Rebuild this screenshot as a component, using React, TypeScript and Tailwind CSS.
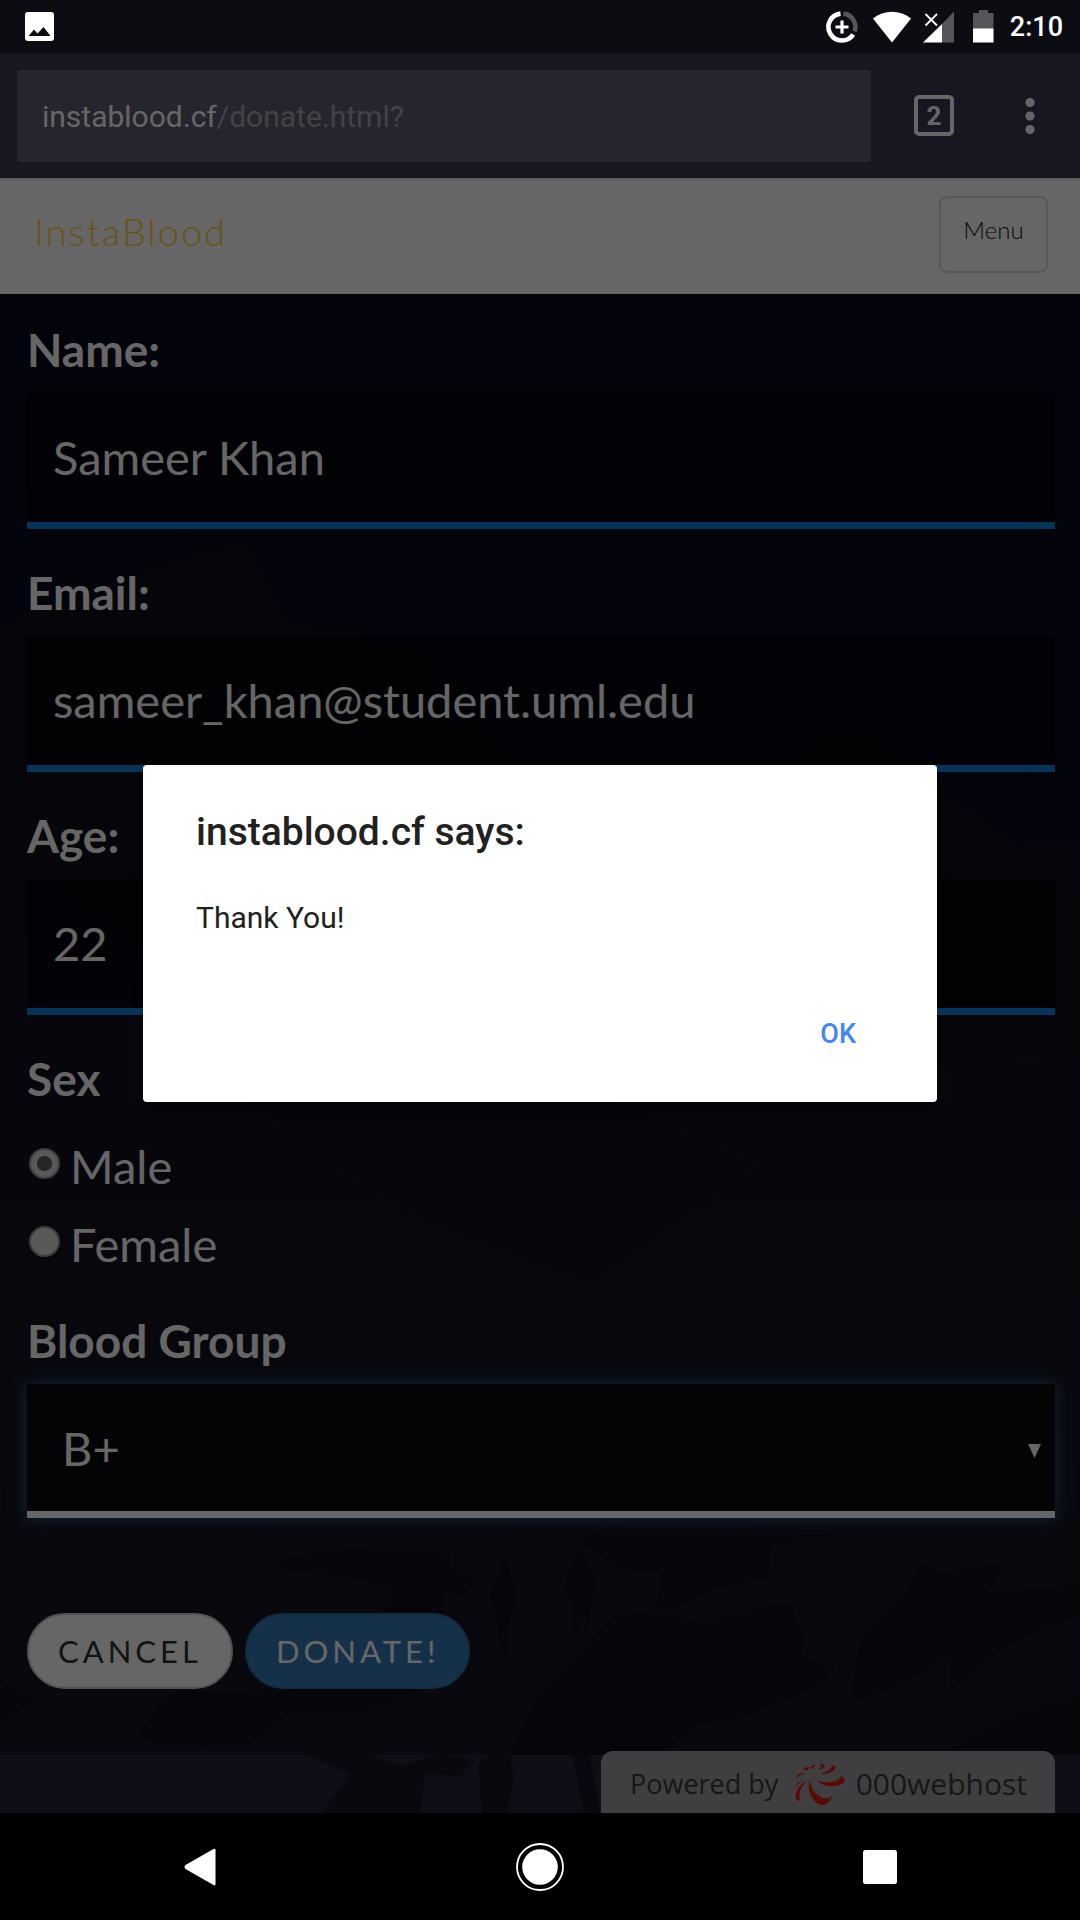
import { useState } from "react";
import type { ReactNode } from "react";

const BLOOD_GROUPS = ["A+", "A-", "B+", "B-", "AB+", "AB-", "O+", "O-"];

function StatusBar() {
    return (
        <header className="h-[53px] bg-[#0c0d12] flex items-center justify-between pl-[25px] pr-[17px] shrink-0">
            <svg width="30" height="30" viewBox="0 0 30 30" aria-label="Screenshot saved">
                <rect x="0" y="0" width="29" height="29" rx="3" fill="#fff" />
                <path d="M3.500 24L9 17.500L12.500 21.500L18.500 15L25.500 24Z" fill="#0c0d12" />
            </svg>
            <div className="flex items-center text-white">
                <svg width="32" height="32" viewBox="0 0 32 32" fill="none" aria-label="Data saver">
                    <path d="M17.500 2.600A13.500 13.500 0 0 1 28.600 20.500" stroke="#56555a" strokeWidth="4.600" />
                    <path d="M14.500 2.600A13.500 13.500 0 1 0 27.200 23.500" stroke="#fff" strokeWidth="4.600" />
                    <path d="M16 9.500V22.500M9.500 16H22.500" stroke="#fff" strokeWidth="3.200" />
                </svg>
                <svg className="ml-[14px]" width="40" height="32" viewBox="0 0 40 32" aria-label="Wi-Fi">
                    <path d="M1 7.500C12 -1.500 28 -1.500 39 7.500L20 31.500Z" fill="#fff" />
                </svg>
                <svg className="ml-[11px]" width="32" height="32" viewBox="0 0 32 32" aria-label="No signal">
                    <path d="M31 0.500V31.500H19V13Z" fill="#56555a" />
                    <path d="M0 31.500L19 13V31.500Z" fill="#fff" />
                    <path d="M2.500 3L14 14.500M14 3L2.500 14.500" stroke="#fff" strokeWidth="1.800" />
                </svg>
                <svg className="ml-[18px]" width="21" height="33" viewBox="0 0 21 33" aria-label="Battery">
                    <path d="M6 0H15V3H20.500V19H0V3H6Z" fill="#56555a" />
                    <rect x="0" y="18.500" width="20.500" height="14" fill="#fff" />
                </svg>
                <span className="ml-4 text-[27px] leading-8 font-medium">2:10</span>
            </div>
        </header>
    );
}

function AddressBar() {
    return (
        <div className="h-[125px] bg-[#3c3750] flex items-center pl-[17px] pr-[38px] shrink-0">
            <button
                type="button"
                className="flex-1 h-[92px] bg-[#5f5a71] rounded-[3px] pl-[25px] pt-[2px] text-left text-[30px] leading-9 text-white"
            >
                instablood.cf<span className="text-[#a8a6b0]">/donate.html?</span>
            </button>
            <button
                type="button"
                aria-label="Open tabs"
                className="ml-[43px] w-10 h-[41px] border-4 border-white rounded-[5px] text-[26px] leading-8 font-bold text-white flex items-center justify-center"
            >
                2
            </button>
            <button type="button" aria-label="More options" className="ml-[64px] w-6 h-10 flex items-center justify-center">
                <svg width="10" height="38" viewBox="0 0 10 38" fill="#fff">
                    <circle cx="5" cy="5.500" r="4.600" />
                    <circle cx="5" cy="19" r="4.600" />
                    <circle cx="5" cy="32.500" r="4.600" />
                </svg>
            </button>
        </div>
    );
}

function SiteHeader() {
    return (
        <div className="h-[116px] bg-white border-t-2 border-[#e4e4e4] flex items-start justify-between pl-[34px] pr-8 pt-4 font-['Lato',sans-serif] shrink-0">
            <a href="#home" className="mt-[11px] text-[38px] leading-[48px] font-light tracking-[2px] text-[#fed136]">
                InstaBlood
            </a>
            <button type="button" className="w-[109px] h-[77px] border-2 border-[#dddddd] rounded-lg pb-[10px] text-[24px] leading-8 font-light text-[#222222]">
                Menu
            </button>
        </div>
    );
}

/* Night mountain scene behind the form */
function Scenery() {
    return (
        <svg
            className="absolute inset-0 w-full h-full"
            viewBox="0 0 1080 1519"
            preserveAspectRatio="none"
            aria-hidden="true"
        >
            <defs>
                <linearGradient id="sky" x1="0" y1="0" x2="0" y2="1">
                    <stop offset="0" stopColor="#08081f" />
                    <stop offset="0.300" stopColor="#0b0b1e" />
                    <stop offset="0.550" stopColor="#13111f" />
                    <stop offset="1" stopColor="#181624" />
                </linearGradient>
            </defs>
            <rect width="1080" height="1519" fill="url(#sky)" />
            <path d="M0 330L160 270L245 245L290 330L420 350L560 520L700 500L860 430L1080 600V760L620 800L250 720L0 560Z" fill="#0e0d19" />
            <path d="M245 800L330 780L470 760L640 820L760 870L590 990L430 930L330 870Z" fill="#110f1b" />
            <path d="M262 1274L290 1262L350 1255L380 1256L450 1260L448 1272L480 1285L460 1303L447 1296L440 1330H375L395 1294L340 1282Z" fill="#110f1a" />
            <path d="M506 1264q6 6 5 18q8 16 6 28l-6 10l-3 40h-9l-3 -42l-7 -10q0 -20 10 -28q0 -12 7 -16Z" fill="#110f1a" />
            <path d="M581 1258q7 4 7 14q11 12 8 30l-4 2l-3 34h-5l-2 -28l-3 28h-7l-2 -34l-5 -4q0 -20 8 -28q1 -12 8 -14Z" fill="#110f1a" />
            <path d="M578 1248L605 1232L720 1233L840 1236L830 1246L770 1250L768 1284L716 1294L690 1308L655 1320L662 1278L625 1276Z" fill="#100e18" />
            <path d="M540 1400L613 1323L640 1318L690 1325L745 1322L760 1308L793 1312L795 1330L808 1332L800 1362L835 1374L820 1392L740 1424L700 1430L660 1460H510L525 1430Z" fill="#100e19" />
            <path d="M852 1408L858 1350L890 1312L905 1300L922 1270L940 1278L1008 1268L985 1300L1080 1290V1320L1010 1350L950 1396L952 1360L900 1392Z" fill="#110f1a" />
            <path d="M940 1461L1000 1425L1080 1400V1461Z" fill="#12101b" />
            <path d="M0 1386L36 1406L0 1430ZM138 1440L160 1410L178 1396L240 1398L300 1390L425 1392L380 1416L290 1420L250 1450L160 1452Z" fill="#11101b" />
            <rect y="1461" width="1080" height="58" fill="#27243a" />
            <path d="M322 1519L350 1480L308 1461H370L400 1472L440 1461L475 1466L460 1482L425 1480L420 1519ZM478 1470L490 1461H510L514 1484L507 1519H482ZM572 1461H590L600 1519H584Z" fill="#191626" />
        </svg>
    );
}

interface FieldProps {
    id: string;
    label: string;
    value: string;
    type?: string;
    onChange: (value: string) => void;
}

function Field({ id, label, value, type = "text", onChange }: FieldProps) {
    return (
        <div className="mb-9 flex flex-col gap-[15px]">
            <label htmlFor={id} className="text-[46px] leading-14 font-bold text-white">
                {label}
            </label>
            <input
                id={id}
                type={type}
                value={value}
                onChange={e => onChange(e.target.value)}
                className="w-full h-[136px] bg-black/50 border-b-[7px] border-[#0c8dea]/95 pl-[26px] pr-6 pb-[2px] text-[47px] leading-14 text-white outline-none"
            />
        </div>
    );
}

interface RadioProps {
    value: string;
    checked: boolean;
    onSelect: (value: string) => void;
}

function SexOption({ value, checked, onSelect }: RadioProps) {
    return (
        <label className="h-[78px] flex items-center gap-[10px] pl-[2px] text-[47px] leading-14 text-white">
            <input
                type="radio"
                name="sex"
                value={value}
                checked={checked}
                onChange={() => onSelect(value)}
                className="appearance-none mb-[6px] w-[31px] h-[31px] rounded-full border-2 border-[#9a9a9a] bg-[#dedede] checked:bg-[radial-gradient(circle,#5f5f5f_0_7px,#dedede_8px)]"
            />
            {value}
        </label>
    );
}

function HostLogo() {
    return (
        <svg width="52" height="44" viewBox="0 0 52 44" fill="#dd1d07" aria-hidden="true">
            <path d="M16 18C17 27 22 34 29 36C33 37 36 35 38.500 34.500C36 40 32 43.500 27 43C19 41 12 29 16 18Z" />
            <path d="M23 18C30 21 38 21 44 18C46 16 46 14.500 49 14.500C52 17 51 21 47 22.500C39 25.500 28 25 23 18Z" />
            <path d="M12.500 19C7 24 5.500 30 5.500 35L7 38.500C4.500 39.500 1.500 38 1.500 35C2 28 6 22 12.500 19Z" />
            <path d="M26.500 11.500C32 10 36 8 37 5.500C37.500 3 40 2 41.500 4C42.500 8 36 13 26.500 11.500Z" />
            <path d="M24.500 7C27.500 6 28 4 25.500 1.500C30 1 31.500 4 29.500 6C28 7.500 26 7.500 24.500 7Z" />
            <path d="M17 6C17 3 20 2 22.500 3L20 4.500L19.500 7Z" />
            <path d="M10 17.500C6 19 3 23 1.500 27.500C1.500 22 5 18 10 17.500Z" />
            <path d="M12 12C7 12 4 14 2 18C2.500 12.500 7 10 12 12Z" />
            <path d="M9 8C10.500 5.500 13 4.500 16 5.500L13.500 8.500Z" />
        </svg>
    );
}

function DonateForm({ children }: { children?: ReactNode }) {
    const [name, setName] = useState("Sameer Khan");
    const [email, setEmail] = useState("sameer_khan@student.uml.edu");
    const [age, setAge] = useState("22");
    const [sex, setSex] = useState("Male");
    const [group, setGroup] = useState("B+");

    return (
        <section className="relative flex-1 overflow-hidden font-['Lato',sans-serif]">
            <Scenery />
            <form className="relative pl-[27px] pr-[25px] pt-7" onSubmit={e => e.preventDefault()}>
                <Field id="name" label="Name:" value={name} onChange={setName} />
                <Field id="email" label="Email:" type="email" value={email} onChange={setEmail} />
                <Field id="age" label="Age:" value={age} onChange={setAge} />

                <fieldset className="mb-[30px]">
                    <legend className="text-[46px] leading-14 font-bold text-white mb-5">Sex</legend>
                    <SexOption value="Male" checked={sex === "Male"} onSelect={setSex} />
                    <SexOption value="Female" checked={sex === "Female"} onSelect={setSex} />
                </fieldset>

                <div className="flex flex-col gap-[15px]">
                    <label htmlFor="group" className="text-[46px] leading-14 font-bold text-white">
                        Blood Group
                    </label>
                    <div className="relative">
                        <select
                            id="group"
                            value={group}
                            onChange={e => setGroup(e.target.value)}
                            className="appearance-none block w-full h-[134px] bg-[#0c0c10] border-b-[7px] border-white pl-[35px] pr-12 text-[47px] leading-14 text-white shadow-[0_0_17px_#2f5f8f] outline-none"
                        >
                            {BLOOD_GROUPS.map(g => (
                                <option key={g} value={g}>{g}</option>
                            ))}
                        </select>
                        <svg className="absolute right-[14px] top-[60px] pointer-events-none" width="13" height="14" viewBox="0 0 13 14">
                            <path d="M0 0H13L6.500 14Z" fill="#fff" />
                        </svg>
                    </div>
                </div>

                <div className="mt-[95px] flex gap-3 text-[31px] leading-10 tracking-[4px]">
                    <button type="reset" className="h-[76px] px-[29px] rounded-full border-2 border-[#cccccc] bg-white text-[#333333]">
                        CANCEL
                    </button>
                    <button type="submit" className="h-[76px] px-[29px] rounded-full border-2 border-[#2e6da4] bg-[#337ab7] text-white">
                        DONATE!
                    </button>
                </div>
            </form>
            {children}
        </section>
    );
}

function HostBadge() {
    return (
        <a
            href="#host"
            className="absolute bottom-0 right-[25px] w-[454px] h-[62px] rounded-t-[12px] bg-[#9e9ea2] flex items-center pt-1 pl-[29px] pr-7 font-['Open_Sans',sans-serif] text-[27px] leading-8 text-[#3a3a3a]"
        >
            Powered by
            <span className="ml-auto pr-[10px]"><HostLogo /></span>
            <span className="text-[30px] font-medium">000webhost</span>
        </a>
    );
}

function AlertDialog({ onClose }: { onClose: () => void }) {
    return (
        <div className="absolute inset-0 bg-black/60 flex items-center justify-center px-[143px]">
            <div
                role="alertdialog"
                aria-labelledby="alert-title"
                aria-describedby="alert-text"
                className="w-full bg-white rounded-[4px] px-[53px] pt-[43px] pb-9 text-[#212121] shadow-lg"
            >
                <h2 id="alert-title" className="text-[39px] leading-12 font-medium">instablood.cf says:</h2>
                <p id="alert-text" className="mt-[42px] text-[30px] leading-10">Thank You!</p>
                <div className="mt-16 flex justify-end">
                    <button
                        type="button"
                        onClick={onClose}
                        className="h-16 px-7 text-[27px] leading-8 font-medium text-[#4285f4]"
                    >
                        OK
                    </button>
                </div>
            </div>
        </div>
    );
}

function NavBar() {
    return (
        <nav className="h-[107px] bg-black flex items-center justify-between px-[176px] shrink-0">
            <button type="button" aria-label="Back" className="w-12 h-12 flex items-center justify-center">
                <svg width="32" height="38" viewBox="0 0 32 38">
                    <path d="M31.500 2V36Q31.500 38 29.500 37L1.500 21Q-0.500 19 1.500 17L29.500 1Q31.500 0 31.500 2Z" fill="#fff" />
                </svg>
            </button>
            <button type="button" aria-label="Home" className="w-12 h-12 flex items-center justify-center">
                <svg width="48" height="48" viewBox="0 0 48 48">
                    <circle cx="24" cy="24" r="23" fill="none" stroke="#fff" strokeWidth="1.800" />
                    <circle cx="24" cy="24" r="17.800" fill="#fff" />
                </svg>
            </button>
            <button type="button" aria-label="Recent apps" className="w-12 h-12 flex items-center justify-center">
                <svg width="34" height="34" viewBox="0 0 34 34">
                    <rect width="34" height="34" rx="2.500" fill="#fff" />
                </svg>
            </button>
        </nav>
    );
}

export default function App() {
    const [showAlert, setShowAlert] = useState(true);

    return (
        <div className="min-h-screen flex flex-col bg-black font-['Roboto',sans-serif]">
            <StatusBar />
            <main className="relative flex-1 flex flex-col">
                <AddressBar />
                <SiteHeader />
                <DonateForm>
                    <HostBadge />
                </DonateForm>
                {showAlert && <AlertDialog onClose={() => setShowAlert(false)} />}
            </main>
            <NavBar />
        </div>
    );
}
